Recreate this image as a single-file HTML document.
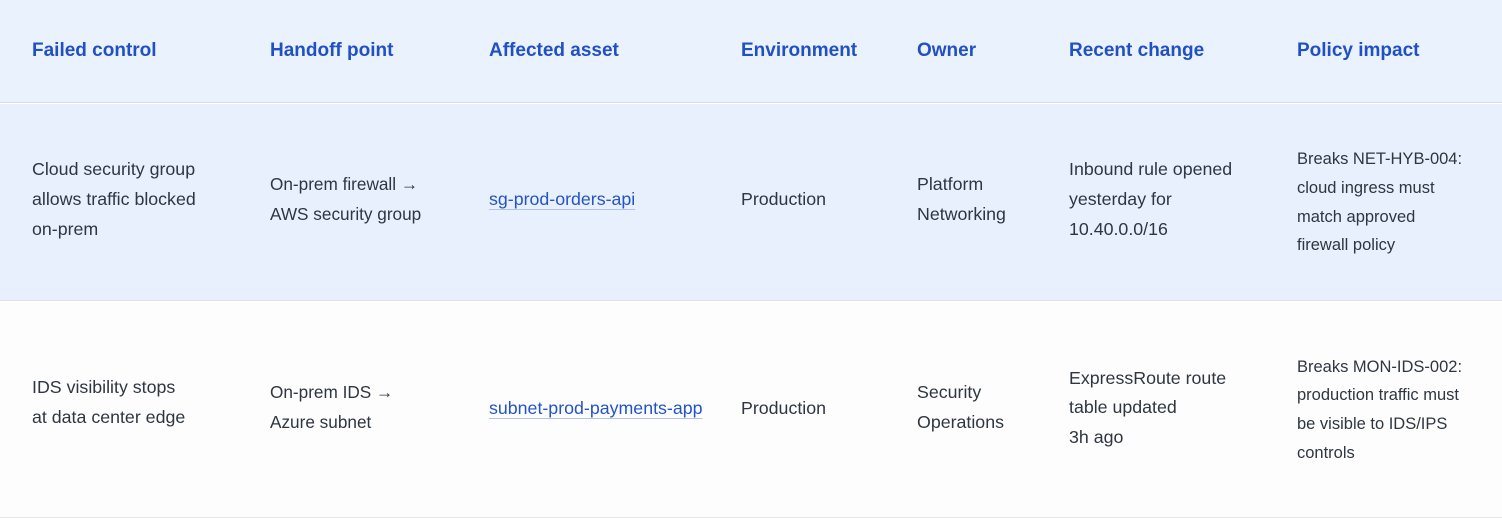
<!DOCTYPE html>
<html><head><meta charset="utf-8"><style>
*{margin:0;padding:0;box-sizing:border-box}
body{width:1502px;height:524px;background:#fff;font-family:"Liberation Sans",sans-serif;position:relative;overflow:hidden;color:#2f3640}
.hdr{position:absolute;left:0;top:0;width:1502px;height:103px;background:#eaf2fd;border-bottom:1px solid #d6dde8}
.r1{position:absolute;left:0;top:104px;width:1502px;height:197px;background:#e7f0fc;border-bottom:1px solid #dde2ea}
.r2{position:absolute;left:0;top:302px;width:1502px;height:216px;background:#fdfdfe;border-bottom:1px solid #e3e6ec}
.c{position:absolute;display:flex;align-items:center;white-space:nowrap}
.h{font-weight:bold;font-size:19px;color:#2150c4;top:0;height:102px}
.t{font-size:17.8px;line-height:30px}
.p{font-size:16.5px;line-height:28.7px}
.a{color:#2453c6;text-decoration:underline;text-decoration-color:#b5c4e6;text-underline-offset:4px}
</style></head><body>
<div class="hdr"></div><div class="r1"></div><div class="r2"></div>
<div class="c h" style="left:32px">Failed control</div>
<div class="c h" style="left:270px">Handoff point</div>
<div class="c h" style="left:489px">Affected asset</div>
<div class="c h" style="left:741px">Environment</div>
<div class="c h" style="left:917px">Owner</div>
<div class="c h" style="left:1069px">Recent change</div>
<div class="c h" style="left:1297px">Policy impact</div>

<div class="c t" style="left:32px;top:100px;height:197px">Cloud security group<br>allows traffic blocked<br>on-prem</div>
<div class="c t" style="left:270px;top:100px;height:197px;font-size:17.2px">On-prem firewall →<br>AWS security group</div>
<div class="c t" style="left:489px;top:100px;height:197px"><span class="a">sg-prod-orders-api</span></div>
<div class="c t" style="left:741px;top:100px;height:197px">Production</div>
<div class="c t" style="left:917px;top:100px;height:197px">Platform<br>Networking</div>
<div class="c t" style="left:1069px;top:100px;height:197px">Inbound rule opened<br>yesterday for<br>10.40.0.0/16</div>
<div class="c p" style="left:1297px;top:104px;height:197px">Breaks NET-HYB-004:<br>cloud ingress must<br>match approved<br>firewall policy</div>

<div class="c t" style="left:32px;top:294px;height:216px">IDS visibility stops<br>at data center edge</div>
<div class="c t" style="left:270px;top:299px;height:216px;font-size:17.2px">On-prem IDS →<br>Azure subnet</div>
<div class="c t" style="left:489px;top:300px;height:216px"><span class="a">subnet-prod-payments-app</span></div>
<div class="c t" style="left:741px;top:300px;height:216px">Production</div>
<div class="c t" style="left:917px;top:299px;height:216px">Security<br>Operations</div>
<div class="c t" style="left:1069px;top:300px;height:216px;line-height:29.5px">ExpressRoute route<br>table updated<br>3h ago</div>
<div class="c p" style="left:1297px;top:302px;height:216px">Breaks MON-IDS-002:<br>production traffic must<br>be visible to IDS/IPS<br>controls</div>
</body></html>
